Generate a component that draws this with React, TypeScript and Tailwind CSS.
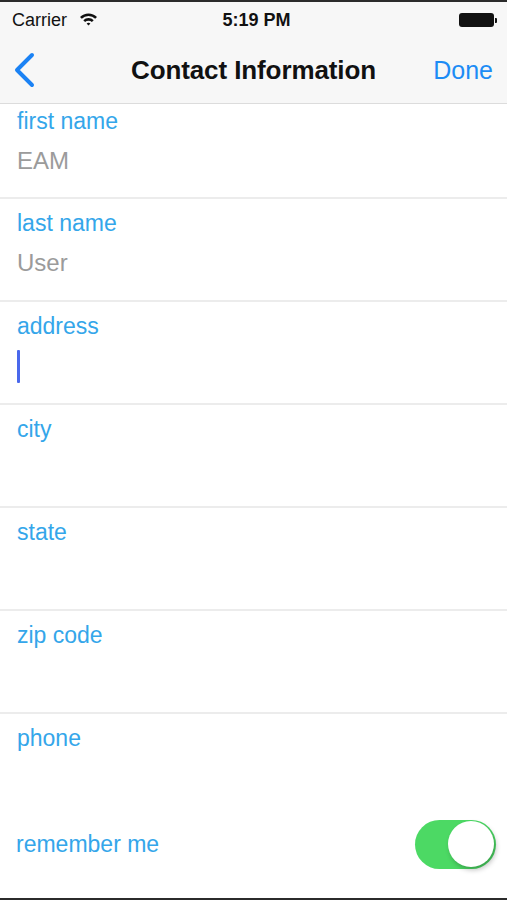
const fields = [
  { label: "address", value: "", cursor: true },
  { label: "city", value: "" },
  { label: "state", value: "" },
  { label: "zip code", value: "" },
]

function StatusBar() {
  return (
    <div className="h-[36px] flex items-center pl-[12px] pr-[10px] relative bg-[#f7f7f7]">
      <span className="text-[18px] text-[#111]">Carrier</span>
      <svg width="19" height="14" viewBox="0 0 19 14" className="ml-[12px] mt-[-2px]">
        <path d="M1 5 A12 12 0 0 1 18 5 L16.2 6.8 A9.5 9.5 0 0 0 2.8 6.8 Z" fill="#111" />
        <path d="M4.3 8.3 A7.3 7.3 0 0 1 14.7 8.3 L12.9 10.1 A4.8 4.8 0 0 0 6.1 10.1 Z" fill="#111" />
        <path d="M7.6 11.6 A2.7 2.7 0 0 1 11.4 11.6 L9.5 13.5 Z" fill="#111" />
      </svg>
      <span className="absolute left-0 right-0 text-center text-[18px] font-bold text-[#111] pl-[6px] pointer-events-none">
        5:19 PM
      </span>
      <div className="ml-auto flex items-center">
        <div className="w-[35px] h-[14px] rounded-[3px] bg-[#111]" />
        <div className="w-[2px] h-[5px] rounded-r-[1px] bg-[#111] ml-[1px]" />
      </div>
    </div>
  )
}

function NavBar() {
  return (
    <div className="h-[66px] flex items-center relative bg-[#f7f7f7] border-b border-[#dcdcdc]">
      <svg width="24" height="36" viewBox="0 0 24 36" className="ml-[12px] mt-[-2px]">
        <polyline points="20,3 5,18 20,33" fill="none" stroke="#1b82f4" strokeWidth="4" strokeLinecap="round" strokeLinejoin="round" />
      </svg>
      <span className="absolute left-0 right-0 text-center text-[26px] font-bold text-[#111] tracking-[-0.1px] pointer-events-none">
        Contact Information
      </span>
      <span className="ml-auto mr-[14px] text-[25px] text-[#1d8cf5]">Done</span>
    </div>
  )
}

function Row({ label, value, cursor, first }: { label: string; value: string; cursor?: boolean; first?: boolean }) {
  return (
    <div className={`${first ? "h-[95px] pt-[3px]" : "h-[103px] pt-[10px]"} border-b-2 border-[#ececec] px-[17px]`}>
      <div className="text-[23px] leading-[28px] text-[#34a6ea]">{label}</div>
      <div className="mt-[11px] h-[30px] flex items-center text-[24px] leading-[30px] text-[#9b9b9b]">
        {cursor ? <div className="w-[3px] h-[33px] rounded-[1px] bg-[#4a68ec]" /> : value}
      </div>
    </div>
  )
}

export default function App() {
  return (
    <div
      className="w-[507px] h-[900px] flex flex-col bg-white border-t-2 border-b-2 border-[#2b2b2b] overflow-hidden"
      style={{ fontFamily: '"Liberation Sans", Arial, sans-serif' }}
    >
      <StatusBar />
      <NavBar />
      <Row first label="first name" value="EAM" />
      <Row label="last name" value="User" />
      {fields.map((f) => (
        <Row key={f.label} label={f.label} value={f.value} cursor={f.cursor} />
      ))}
      <div className="h-[103px] pt-[10px] px-[17px]">
        <div className="text-[23px] leading-[28px] text-[#34a6ea]">phone</div>
      </div>
      <div className="h-[54px] flex items-center px-[16px]">
        <span className="text-[23px] text-[#34a6ea]">remember me</span>
        <div className="ml-auto mr-[-5px] w-[81px] h-[49px] rounded-full bg-[#4cd964] flex items-center justify-end p-[2px]">
          <div className="w-[46px] h-[46px] rounded-full bg-white shadow-[2px_3px_5px_rgba(0,0,0,0.25)]" />
        </div>
      </div>
      <div className="flex-1" />
    </div>
  )
}
